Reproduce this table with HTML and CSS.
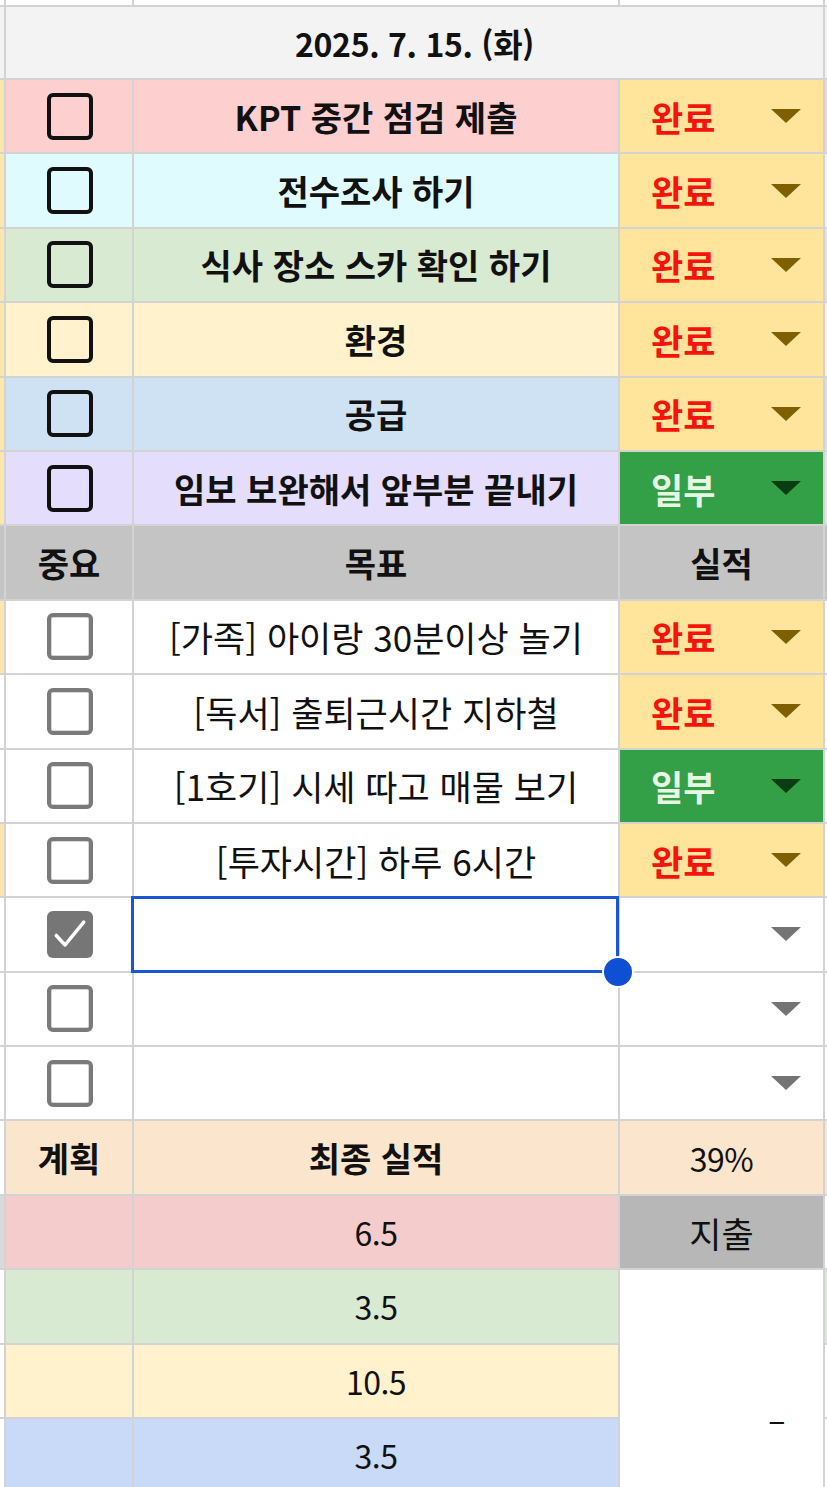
FILE: index.html
```html
<!DOCTYPE html>
<html lang="ko">
<head>
<meta charset="utf-8">
<title>2025. 7. 15. (화)</title>
<link rel="stylesheet" href="styles.css">
</head>
<body>
<div class="sheet">
  <!-- top sliver -->
  <div class="cell edge"></div><div class="cell"></div><div class="cell"></div><div class="cell"></div><div class="cell edge"></div>

  <!-- date -->
  <div class="cell edge bg-gray1"></div>
  <div class="cell span3 bg-gray1 date">2025. 7. 15. (화)</div>
  <div class="cell edge bg-gray1"></div>

  <!-- tasks -->
  <div class="cell edge bg-yel"></div>
  <div class="cell bg-red"><span class="cb cb-dark"></span></div>
  <div class="cell bg-red title">KPT 중간 점검 제출</div>
  <div class="cell chip chip-yel"><span class="chip-text red">완료</span><span class="tri tri-olive"></span></div>
  <div class="cell edge bg-red"></div>

  <div class="cell edge bg-yel"></div>
  <div class="cell bg-cyan"><span class="cb cb-dark"></span></div>
  <div class="cell bg-cyan title">전수조사 하기</div>
  <div class="cell chip chip-yel"><span class="chip-text red">완료</span><span class="tri tri-olive"></span></div>
  <div class="cell edge bg-cyan"></div>

  <div class="cell edge bg-yel"></div>
  <div class="cell bg-green"><span class="cb cb-dark"></span></div>
  <div class="cell bg-green title">식사 장소 스카 확인 하기</div>
  <div class="cell chip chip-yel"><span class="chip-text red">완료</span><span class="tri tri-olive"></span></div>
  <div class="cell edge bg-green"></div>

  <div class="cell edge bg-yel"></div>
  <div class="cell bg-cream"><span class="cb cb-dark"></span></div>
  <div class="cell bg-cream title">환경</div>
  <div class="cell chip chip-yel"><span class="chip-text red">완료</span><span class="tri tri-olive"></span></div>
  <div class="cell edge bg-cream"></div>

  <div class="cell edge bg-yel"></div>
  <div class="cell bg-blue"><span class="cb cb-dark"></span></div>
  <div class="cell bg-blue title">공급</div>
  <div class="cell chip chip-yel"><span class="chip-text red">완료</span><span class="tri tri-olive"></span></div>
  <div class="cell edge bg-blue"></div>

  <div class="cell edge bg-yel"></div>
  <div class="cell bg-purple"><span class="cb cb-dark"></span></div>
  <div class="cell bg-purple title">임보 보완해서 앞부분 끝내기</div>
  <div class="cell chip chip-green"><span class="chip-text light">일부</span><span class="tri tri-dkgreen"></span></div>
  <div class="cell edge bg-purple"></div>

  <!-- header -->
  <div class="cell edge bg-hdr"></div>
  <div class="cell bg-hdr title">중요</div>
  <div class="cell bg-hdr title">목표</div>
  <div class="cell bg-hdr title">실적</div>
  <div class="cell edge bg-hdr"></div>

  <!-- goals -->
  <div class="cell edge bg-yel"></div>
  <div class="cell"><span class="cb cb-gray"></span></div>
  <div class="cell text">[가족] 아이랑 30분이상 놀기</div>
  <div class="cell chip chip-yel"><span class="chip-text red">완료</span><span class="tri tri-olive"></span></div>
  <div class="cell edge"></div>

  <div class="cell edge"></div>
  <div class="cell"><span class="cb cb-gray"></span></div>
  <div class="cell text">[독서] 출퇴근시간 지하철</div>
  <div class="cell chip chip-yel"><span class="chip-text red">완료</span><span class="tri tri-olive"></span></div>
  <div class="cell edge"></div>

  <div class="cell edge"></div>
  <div class="cell"><span class="cb cb-gray"></span></div>
  <div class="cell text">[1호기] 시세 따고 매물 보기</div>
  <div class="cell chip chip-green"><span class="chip-text light">일부</span><span class="tri tri-dkgreen"></span></div>
  <div class="cell edge"></div>

  <div class="cell edge bg-yel"></div>
  <div class="cell"><span class="cb cb-gray"></span></div>
  <div class="cell text">[투자시간] 하루 6시간</div>
  <div class="cell chip chip-yel"><span class="chip-text red">완료</span><span class="tri tri-olive"></span></div>
  <div class="cell edge"></div>

  <div class="cell edge"></div>
  <div class="cell"><span class="cb cb-checked"><svg viewBox="0 0 24 24" width="44" height="44"><path d="M4.5 12.8 L9.3 18 L19.5 5.5" fill="none" stroke="#fff" stroke-width="1.9" stroke-linecap="round" stroke-linejoin="round"/></svg></span></div>
  <div class="cell text selected"><span class="sel-box"></span><span class="sel-handle"></span></div>
  <div class="cell chip"><span class="chip-text"></span><span class="tri tri-gray"></span></div>
  <div class="cell edge"></div>

  <div class="cell edge"></div>
  <div class="cell"><span class="cb cb-gray"></span></div>
  <div class="cell text"></div>
  <div class="cell chip"><span class="chip-text"></span><span class="tri tri-gray"></span></div>
  <div class="cell edge"></div>

  <div class="cell edge"></div>
  <div class="cell"><span class="cb cb-gray"></span></div>
  <div class="cell text"></div>
  <div class="cell chip"><span class="chip-text"></span><span class="tri tri-gray"></span></div>
  <div class="cell edge"></div>

  <!-- summary -->
  <div class="cell edge"></div>
  <div class="cell bg-orange title">계획</div>
  <div class="cell bg-orange title">최종 실적</div>
  <div class="cell bg-orange num">39%</div>
  <div class="cell edge bg-orange"></div>

  <div class="cell edge bg-gray2"></div>
  <div class="cell bg-pink"></div>
  <div class="cell bg-pink num">6.5</div>
  <div class="cell bg-gray3 text">지출</div>
  <div class="cell edge"></div>

  <div class="cell edge"></div>
  <div class="cell bg-green"></div>
  <div class="cell bg-green num">3.5</div>
  <div class="cell merged num">–</div>
  <div class="cell edge bg-green"></div>

  <div class="cell edge"></div>
  <div class="cell bg-cream"></div>
  <div class="cell bg-cream num">10.5</div>
  <div class="cell edge"></div>

  <div class="cell edge"></div>
  <div class="cell bg-corn"></div>
  <div class="cell bg-corn num">3.5</div>
  <div class="cell edge"></div>

  <div class="cell edge"></div>
  <div class="cell"></div>
  <div class="cell"></div>
  <div class="cell edge"></div>
</div>
</body>
</html>
```

FILE: styles.css
```css
html, body {
  margin: 0;
  padding: 0;
  overflow: hidden;
  background: #fff;
}

.sheet {
  display: grid;
  grid-template-columns: 4px 126px 484px 203px 2px;
  grid-template-rows: 5px 71px repeat(20, 72.4px);
  gap: 2px;
  background: #d3d3d3;
  width: 827px;
  font-family: "Noto Sans CJK KR", "Noto Sans", sans-serif;
  color: #111;
}

.cell {
  background: #fff;
  display: flex;
  align-items: center;
  justify-content: center;
  position: relative;
  white-space: nowrap;
  overflow: visible;
}

.span3 { grid-column: span 3; }
.merged {
  grid-row: span 4;
  justify-content: flex-end;
  padding-right: 38px;
  font-weight: 700;
}

.date {
  font-size: 32px;
  font-weight: 700;
  letter-spacing: -0.3px;
}
.title {
  font-size: 34px;
  font-weight: 700;
  letter-spacing: 0;
}
.text {
  font-size: 35px;
  font-weight: 400;
  letter-spacing: 0;
}
.num {
  font-size: 32px;
  font-weight: 400;
  letter-spacing: -0.5px;
}

.bg-gray1 { background: #f3f3f3; }
.bg-yel { background: #fde7ad; }
.bg-red { background: #fdcfcf; }
.bg-cyan { background: #dffbfd; }
.bg-green { background: #d9ead3; }
.bg-cream { background: #fff2cc; }
.bg-blue { background: #cfe2f3; }
.bg-purple { background: #e4ddfb; }
.bg-hdr { background: #c4c4c4; }
.bg-orange { background: #fce5cd; }
.bg-pink { background: #f4cccc; }
.bg-gray2 { background: #d9d9d9; }
.bg-gray3 { background: #b7b7b7; }
.bg-corn { background: #c9daf8; }

/* checkboxes */
.cb {
  box-sizing: border-box;
  width: 46px;
  height: 47px;
  border-radius: 6px;
  display: flex;
  align-items: center;
  justify-content: center;
  margin-left: 2px;
}
.cb-dark { border: 4px solid #111; }
.cb-gray {
  border: 4px solid #7a7a7a;
  background: #fff;
  box-shadow: inset 0 0 0 1px #d8d8d8;
}
.cb-checked { background: #767676; }

/* status chips */
.chip {
  justify-content: space-between;
  padding: 0 22px 0 31px;
}
.chip-yel { background: #ffe59c; }
.chip-green { background: #33a047; }
.chip-text {
  font-size: 35px;
  font-weight: 700;
  letter-spacing: 0;
}
.red { color: #f5140c; }
.light { color: #e6f7e6; }

.tri {
  width: 0;
  height: 0;
  border-left: 15px solid transparent;
  border-right: 15px solid transparent;
  border-top: 14px solid #7f6000;
}
.tri-olive { border-top-color: #7f6000; }
.tri-dkgreen { border-top-color: #0b3d14; }
.tri-gray { border-top-color: #747474; }

/* selection */
.selected { z-index: 2; }
.sel-box {
  position: absolute;
  top: -2px;
  left: -3px;
  right: -1px;
  bottom: -2px;
  border: 3px solid #1c56d4;
}
.sel-handle {
  position: absolute;
  right: -16px;
  bottom: -17px;
  width: 28px;
  height: 28px;
  border-radius: 50%;
  background: #0f4fd4;
  border: 2px solid #fff;
}
```
